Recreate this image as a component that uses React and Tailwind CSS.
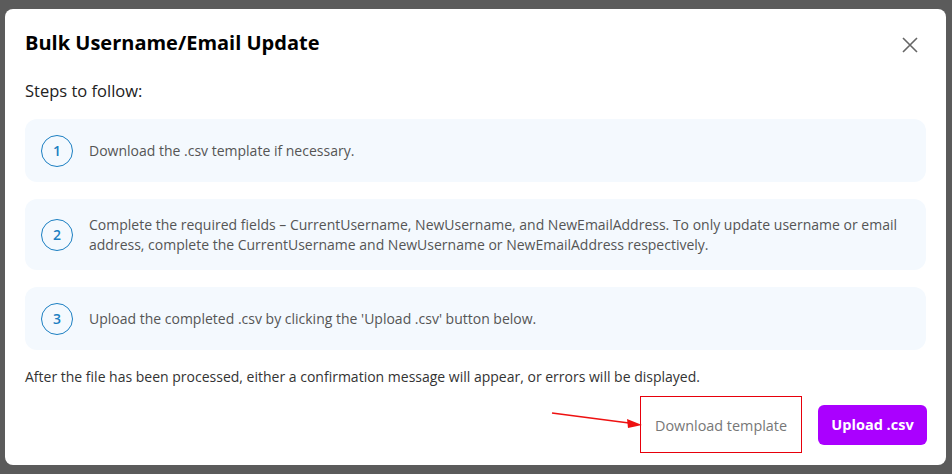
const steps = [
  'Download the .csv template if necessary.',
  'Complete the required fields – CurrentUsername, NewUsername, and NewEmailAddress. To only update username or email address, complete the CurrentUsername and NewUsername or NewEmailAddress respectively.',
  "Upload the completed .csv by clicking the 'Upload .csv' button below.",
];

export default function App() {
  return (
    <div
      className="w-[952px] h-[474px] bg-[#5b5b5b] pt-[9px] pl-[5px] overflow-hidden"
      style={{ fontFamily: '"Open Sans", sans-serif' }}
    >
      {/* Modal */}
      <div className="relative w-[941px] h-[456px] rounded-lg bg-white px-5">
        {/* Header */}
        <div className="flex items-center justify-between pt-[24px] h-[44px]">
          <h2 className="text-[20px] font-bold text-black leading-5">
            Bulk Username/Email Update
          </h2>
          <button className="mr-[8px] mt-[3px] text-[#666]">
            <svg className="w-[16px] h-[16px]" viewBox="0 0 16 16" fill="none" stroke="currentColor" strokeWidth={1.6}>
              <path d="M1 1l14 14M15 1L1 15" />
            </svg>
          </button>
        </div>

        <p className="mt-[28px] text-[16.5px] text-[#222] leading-5">Steps to follow:</p>

        <div className="mt-[18px] flex flex-col gap-[17px]">
          {steps.map((text, i) => (
            <div key={i} className="flex items-center gap-4 rounded-xl bg-[#f4f9fe] px-4 py-[15.5px]">
              <div className="w-8 h-8 flex-shrink-0 rounded-full border-[1.5px] border-[#1b7fc2] flex items-center justify-center text-[14px] font-semibold text-[#1b7fc2]">
                {i + 1}
              </div>
              <p className="text-[14px] leading-5 text-[#555]">{text}</p>
            </div>
          ))}
        </div>

        <p className="mt-[17px] text-[14px] leading-5 text-[#333]">
          After the file has been processed, either a confirmation message will appear, or errors will be displayed.
        </p>

        {/* Footer */}
        <div className="mt-[9px] flex items-center justify-end gap-4 -mr-px">
          <div className="w-[162px] h-[57px] border border-solid border-red-600 flex items-center justify-center">
            <span className="text-[14.4px] text-[#777] mt-[3px]">Download template</span>
          </div>
          <button className="h-10 w-[109px] rounded-md bg-[#aa00ff] text-white text-[14.5px] font-bold">
            Upload .csv
          </button>
        </div>

        {/* annotation arrow */}
        <svg className="absolute left-[544px] top-[400px] w-[95px] h-[24px]" viewBox="0 0 95 24" fill="none">
          <path d="M3 4 L80 14" stroke="#ee1111" strokeWidth="1.6" />
          <path d="M93 16 L78 10 L79 19 Z" fill="#ee1111" />
        </svg>
      </div>
    </div>
  );
}
